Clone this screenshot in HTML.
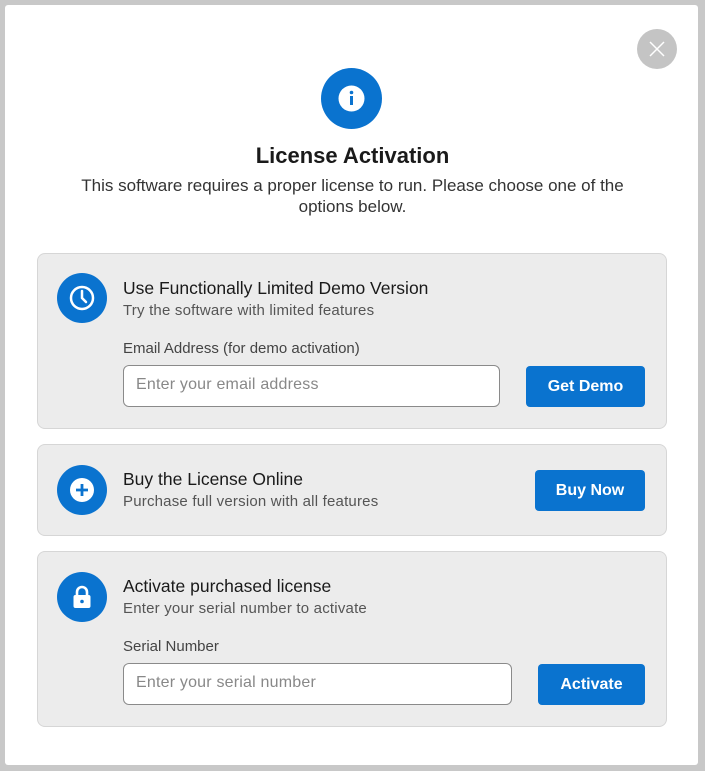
<!DOCTYPE html>
<html><head><meta charset="utf-8"><style>
*{box-sizing:border-box;margin:0;padding:0}
body{width:705px;height:771px;background:#c8c8c8;font-family:"Liberation Sans",sans-serif;position:relative;overflow:hidden}
.win{position:absolute;left:5px;top:5px;width:693px;height:760px;background:#fff;border-radius:3px}
.abs{position:absolute}
.close{left:637px;top:29px;width:40px;height:40px;border-radius:50%;background:#c4c4c4}
.info{left:321px;top:68px;width:61px;height:61px;border-radius:50%;background:#0a73cf}
h1{position:absolute;left:0;width:705px;top:143px;text-align:center;font-size:22px;font-weight:bold;color:#1a1a1a}
.desc{position:absolute;left:52px;width:601px;top:175px;text-align:center;font-size:17px;line-height:21px;color:#333}
.card{position:absolute;left:37px;width:630px;background:#ececec;border:1px solid #d6d6d6;border-radius:8px}
.ic{position:absolute;left:57px;width:50px;height:50px;border-radius:50%;background:#0a73cf}
.t{position:absolute;left:123px;font-size:17.5px;color:#1a1a1a}
.s{position:absolute;left:123px;font-size:15px;color:#555;letter-spacing:.2px}
.lbl{position:absolute;left:123px;font-size:15px;color:#444}
.inp{position:absolute;left:123px;height:42px;background:#fff;border:1px solid #8a8a8a;border-radius:6px;font-size:16px;color:#888;padding:10px 12px;letter-spacing:.2px}
.btn{position:absolute;height:41px;background:#0a73cf;border-radius:4px;color:#fff;font-weight:bold;font-size:16px;text-align:center;line-height:41px}
</style></head><body>
<div class="win"></div>
<div class="abs close"><svg width="40" height="40"><path d="M13 13L27 27M27 13L13 27" stroke="#fff" stroke-width="1.5" fill="none"/></svg></div>
<div class="abs info"><svg width="61" height="61"><circle cx="30.5" cy="30.5" r="13" fill="#fff"/><circle cx="30.5" cy="24.5" r="1.8" fill="#0a73cf"/><rect x="29" y="28" width="3" height="9" fill="#0a73cf"/></svg></div>
<h1>License Activation</h1>
<div class="desc">This software requires a proper license to run. Please choose one of the options below.</div>

<div class="card" style="top:253px;height:176px"></div>
<div class="ic" style="top:273px"><svg width="50" height="50"><circle cx="25" cy="25" r="11" stroke="#fff" stroke-width="2.5" fill="none"/><path d="M25 18V25L29 29" stroke="#fff" stroke-width="2.5" fill="none" stroke-linecap="round"/></svg></div>
<div class="t" style="top:278px">Use Functionally Limited Demo Version</div>
<div class="s" style="top:302px">Try the software with limited features</div>
<div class="lbl" style="top:340px">Email Address (for demo activation)</div>
<div class="inp" style="top:365px;width:377px">Enter your email address</div>
<div class="btn" style="left:526px;top:366px;width:119px">Get Demo</div>

<div class="card" style="top:444px;height:92px"></div>
<div class="ic" style="top:465px"><svg width="50" height="50"><circle cx="25" cy="25" r="12" fill="#fff"/><path d="M25 19V31M19 25H31" stroke="#0a73cf" stroke-width="2.8"/></svg></div>
<div class="t" style="top:469px">Buy the License Online</div>
<div class="s" style="top:493px">Purchase full version with all features</div>
<div class="btn" style="left:535px;top:470px;width:110px">Buy Now</div>

<div class="card" style="top:551px;height:176px"></div>
<div class="ic" style="top:572px"><svg width="50" height="50"><path d="M20 24V20a5 5 0 0 1 10 0V24" stroke="#fff" stroke-width="2.6" fill="none"/><rect x="16.5" y="23" width="17" height="13" rx="2" fill="#fff"/><circle cx="25" cy="29.5" r="1.8" fill="#0a73cf"/></svg></div>
<div class="t" style="top:576px">Activate purchased license</div>
<div class="s" style="top:600px">Enter your serial number to activate</div>
<div class="lbl" style="top:638px">Serial Number</div>
<div class="inp" style="top:663px;width:389px">Enter your serial number</div>
<div class="btn" style="left:538px;top:664px;width:107px">Activate</div>
</body></html>
